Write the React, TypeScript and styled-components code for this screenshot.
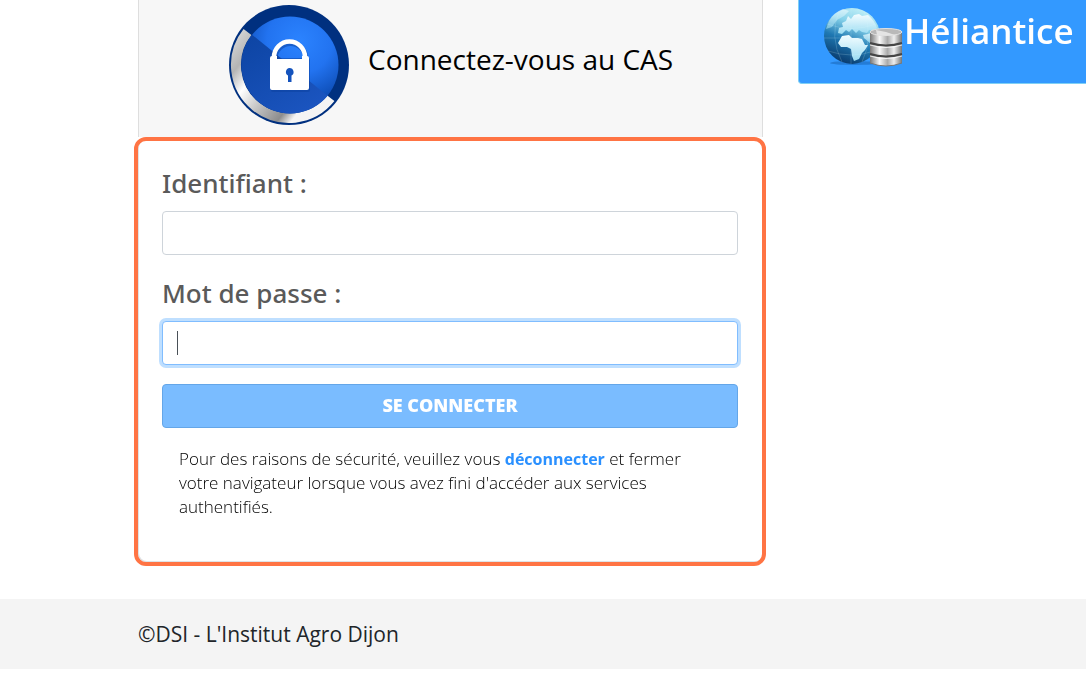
import React from "react";
import styled, { createGlobalStyle } from "styled-components";

const GlobalStyle = createGlobalStyle`
  *, *::before, *::after { box-sizing: border-box; }
  body {
    margin: 0;
    background: #fff;
    color: #212529;
    font-family: "Open Sans", "Noto Sans", sans-serif;
    font-size: 16px;
    line-height: 24px;
  }
`;

const Main = styled.main`
  display: grid;
  grid-template-columns: minmax(0, 632fr) minmax(0, 288fr);
  column-gap: 32px;
  align-items: start;
  padding: 0 0 33px 134px;
`;

const LoginCard = styled.section`
  display: flex;
  flex-direction: column;
`;

const CardHeader = styled.header`
  display: flex;
  align-items: center;
  gap: 18px;
  margin: 0 3px 0 4px;
  padding: 5px 0 11px 90px;
  background: #f7f7f7;
  border: solid #dedede;
  border-width: 0 1px;
`;

const Title = styled.h1`
  margin: 0;
  padding-bottom: 14px;
  color: #000;
  font-size: 28px;
  font-weight: 400;
  line-height: 36px;
  white-space: nowrap;
`;

const LoginForm = styled.form`
  display: flex;
  flex-direction: column;
  padding: 24px 24px 43px;
  border: 4px solid #ff7444;
  border-radius: 12px;
  box-shadow: inset 1px -1px 0 #dfe3e6;
  background: #fff;
`;

const Field = styled.div`
  display: flex;
  flex-direction: column;
  gap: 10px;
  margin-bottom: 20px;

  & + button { margin-top: -1px; }
`;

const Label = styled.label`
  color: #5a5a5a;
  font-family: "Noto Sans", "Open Sans", sans-serif;
  font-size: 26px;
  font-weight: 500;
  line-height: 36px;
`;

const TextInput = styled.input`
  width: 100%;
  height: 44px;
  padding: 8px 14px;
  border: 1px solid #ced4da;
  border-radius: 4px;
  background: #fff;
  color: #495057;
  font: inherit;
  font-size: 20px;
  outline: none;

  &:focus {
    border-color: #80bdff;
    box-shadow: 0 0 0 3px #bfdfff;
  }

  /* Steady caret while the focused field is empty */
  &:focus:placeholder-shown {
    caret-color: transparent;
    background: #fff linear-gradient(#495057, #495057) 14px center / 1px 24px no-repeat;
  }
`;

const SubmitButton = styled.button`
  height: 44px;
  padding: 0 0 2px;
  border: 1px solid #64a6e8;
  border-radius: 4px;
  background: #7abcff;
  color: #fff;
  font: inherit;
  font-size: 18px;
  font-weight: 800;
  cursor: pointer;
`;

const Notice = styled.p`
  margin: 19px 56px 0 17px;
  color: #000;
  font-size: 17px;
  font-weight: 300;
  line-height: 24px;
`;

const Link = styled.a`
  color: #2a90ff;
  font-size: 16px;
  font-weight: 700;
  text-decoration: none;
`;

const Banner = styled.aside`
  display: flex;
  align-items: flex-start;
  height: 84px;
  padding: 7px 0 0 25px;
  overflow: hidden;
  background: #3399ff;
  border: solid #7fd0f5;
  border-width: 0 0 1px 1px;
  border-radius: 0 0 0 4px;
`;

const BannerTitle = styled.h2`
  margin: 0;
  color: #fff;
  font-size: 35px;
  font-weight: 600;
  line-height: 48px;
  white-space: nowrap;
`;

const Footer = styled.footer`
  padding: 20px 138px;
  background: #f4f4f4;
  font-size: 21px;
  font-weight: 400;
  line-height: 30px;
`;

const Icon = styled.svg`
  display: block;
  flex: none;
`;

function LockBadge() {
  return (
    <Icon width="121" height="121" viewBox="0 0 121 121" aria-hidden="true">
      <defs>
        <radialGradient id="disc" cx="0.6" cy="0.25" r="0.75">
          <stop offset="0" stopColor="#2b83ff" />
          <stop offset="0.45" stopColor="#2273f0" />
          <stop offset="1" stopColor="#063fa0" />
        </radialGradient>
        <linearGradient id="shade" x1="0" y1="0" x2="0.7" y2="1">
          <stop offset="0" stopColor="#0b429f" />
          <stop offset="1" stopColor="#1c56c2" />
        </linearGradient>
        <linearGradient id="steel" x1="0" y1="0" x2="1" y2="0.7">
          <stop offset="0" stopColor="#d8d8d8" />
          <stop offset="0.2" stopColor="#b4b4b4" />
          <stop offset="0.36" stopColor="#ffffff" />
          <stop offset="0.56" stopColor="#c4c4c4" />
          <stop offset="0.78" stopColor="#8d8d8d" />
          <stop offset="0.88" stopColor="#f4f4f4" />
        </linearGradient>
        <clipPath id="discClip"><circle cx="61" cy="60" r="48.500" /></clipPath>
      </defs>
      <circle cx="60" cy="60" r="60" fill="#00307f" />
      <path d="M18.500 27 A53 53 0 0 0 101.500 93" fill="none" stroke="url(#steel)" strokeWidth="10" />
      <circle cx="61" cy="60" r="48.500" fill="url(#disc)" />
      <path d="M16 24 L105 96 L80 121 L0 121 L0 24 Z" fill="url(#shade)" clipPath="url(#discClip)" />
      <path d="M45 58 V53 A15.500 15.500 0 0 1 76 53 V58" fill="none" stroke="#0a3f9e" strokeWidth="5" opacity="0.5" transform="translate(1 1)" />
      <rect x="42" y="53" width="39" height="34" rx="2" fill="#0a3f9e" opacity="0.5" />
      <path d="M45 55 V52 A15.500 15.500 0 0 1 76 52 V55" fill="none" stroke="#fff" strokeWidth="4.500" />
      <path d="M43 51 H48 V54 H73 V51 H78 Q80 51 80 53 V83 Q80 85 78 85 H43 Q41 85 41 83 V53 Q41 51 43 51 Z" fill="#fff" />
      <path d="M60.500 63 a4 4 0 0 1 2 7.500 V77 H59 V70.500 A4 4 0 0 1 60.500 63 Z" fill="#1453bd" />
    </Icon>
  );
}

function GlobeDatabase() {
  return (
    <Icon width="80" height="62" viewBox="0 0 80 62" aria-hidden="true">
      <defs>
        <linearGradient id="ocean" x1="0.7" y1="0" x2="0.3" y2="1">
          <stop offset="0" stopColor="#c5f1f8" />
          <stop offset="0.3" stopColor="#86d2ea" />
          <stop offset="0.6" stopColor="#1f78b2" />
          <stop offset="1" stopColor="#073668" />
        </linearGradient>
        <linearGradient id="land" x1="0" y1="0" x2="0" y2="1">
          <stop offset="0" stopColor="#f4fdff" />
          <stop offset="1" stopColor="#9bdcf2" />
        </linearGradient>
        <linearGradient id="metal" x1="0" y1="0" x2="1" y2="0">
          <stop offset="0" stopColor="#777" />
          <stop offset="0.3" stopColor="#f8f8f8" />
          <stop offset="0.55" stopColor="#aaa" />
          <stop offset="0.75" stopColor="#eee" />
          <stop offset="1" stopColor="#777" />
        </linearGradient>
      </defs>
      <ellipse cx="30" cy="56" rx="24" ry="2" fill="#155fae" opacity="0.5" />
      <circle cx="28" cy="29" r="28" fill="url(#ocean)" />
      <path d="M5 14 Q10 5 19 2 L25 4 L20 9 L13 13 L8 20 L2 22 Z" fill="url(#land)" opacity="0.6" />
      <path d="M14 26 L15 21 L19 20 L18 16 L22 14 L24 9 L27 12 L30 8 L35 7 L38 9 L44 8 Q51 14 53 21 L50 24 L45 23 L43 26 L38 25 L35 23 L32 26 L28 22 L25 25 L22 23 L18 27 Z" fill="url(#land)" />
      <path d="M18 29 L25 28 L28 31 L34 31 L38 32 L41 38 L44 38 L41 43 L38 46 L35 52 L30 54 L28 49 L27 42 L23 40 L17 40 L14 36 Z" fill="url(#land)" />
      <path d="M40 31 L46 36 L49 32 L54 31 L55 27 L50 25 L44 27 L39 28 Z" fill="url(#land)" opacity="0.8" />
      <path d="M3 17 Q28 26 52 17 M0 31 H55 M4 44 Q28 52 50 44 M27 1 V57 M15 4 Q5 30 18 55 M40 4 Q50 30 38 55" fill="none" stroke="#d7f7ff" strokeWidth="1" opacity="0.18" />
      <path d="M46 25 V56 Q62 62 78 56 V25 Z" fill="url(#metal)" />
      <ellipse cx="62" cy="25" rx="16" ry="3.500" fill="#b9b9b9" stroke="#e2e2e2" />
      <path d="M52 23 L62 25 L71 23 L62 25 L71 28 H53 Z" fill="#e4e4e4" />
      <path d="M46 36 Q62 41 78 36 M46 47 Q62 52 78 47" fill="none" stroke="#454545" strokeWidth="2" />
      <path d="M46 38 Q62 43 78 38 M46 49 Q62 54 78 49" fill="none" stroke="#fff" strokeWidth="1" opacity="0.8" />
      <path d="M46 56 Q62 62 78 56" fill="none" stroke="#777" />
    </Icon>
  );
}

export default function App() {
  return (
    <>
      <GlobalStyle />
      <Main>
        <LoginCard>
          <CardHeader>
            <LockBadge />
            <Title>Connectez-vous au CAS</Title>
          </CardHeader>
          <LoginForm onSubmit={(event) => event.preventDefault()}>
            <Field>
              <Label htmlFor="username">Identifiant :</Label>
              <TextInput id="username" name="username" type="text" autoComplete="username" placeholder=" " />
            </Field>
            <Field>
              <Label htmlFor="password">Mot de passe :</Label>
              <TextInput
                id="password"
                name="password"
                type="password"
                autoComplete="current-password"
                placeholder=" "
                autoFocus
              />
            </Field>
            <SubmitButton type="submit">SE CONNECTER</SubmitButton>
            <Notice>
              Pour des raisons de sécurité, veuillez vous <Link href="#logout">déconnecter</Link> et fermer votre
              navigateur lorsque vous avez fini d'accéder aux services authentifiés.
            </Notice>
          </LoginForm>
        </LoginCard>
        <Banner>
          <GlobeDatabase />
          <BannerTitle>Héliantice D</BannerTitle>
        </Banner>
      </Main>
      <Footer>©DSI - L'Institut Agro Dijon</Footer>
    </>
  );
}
